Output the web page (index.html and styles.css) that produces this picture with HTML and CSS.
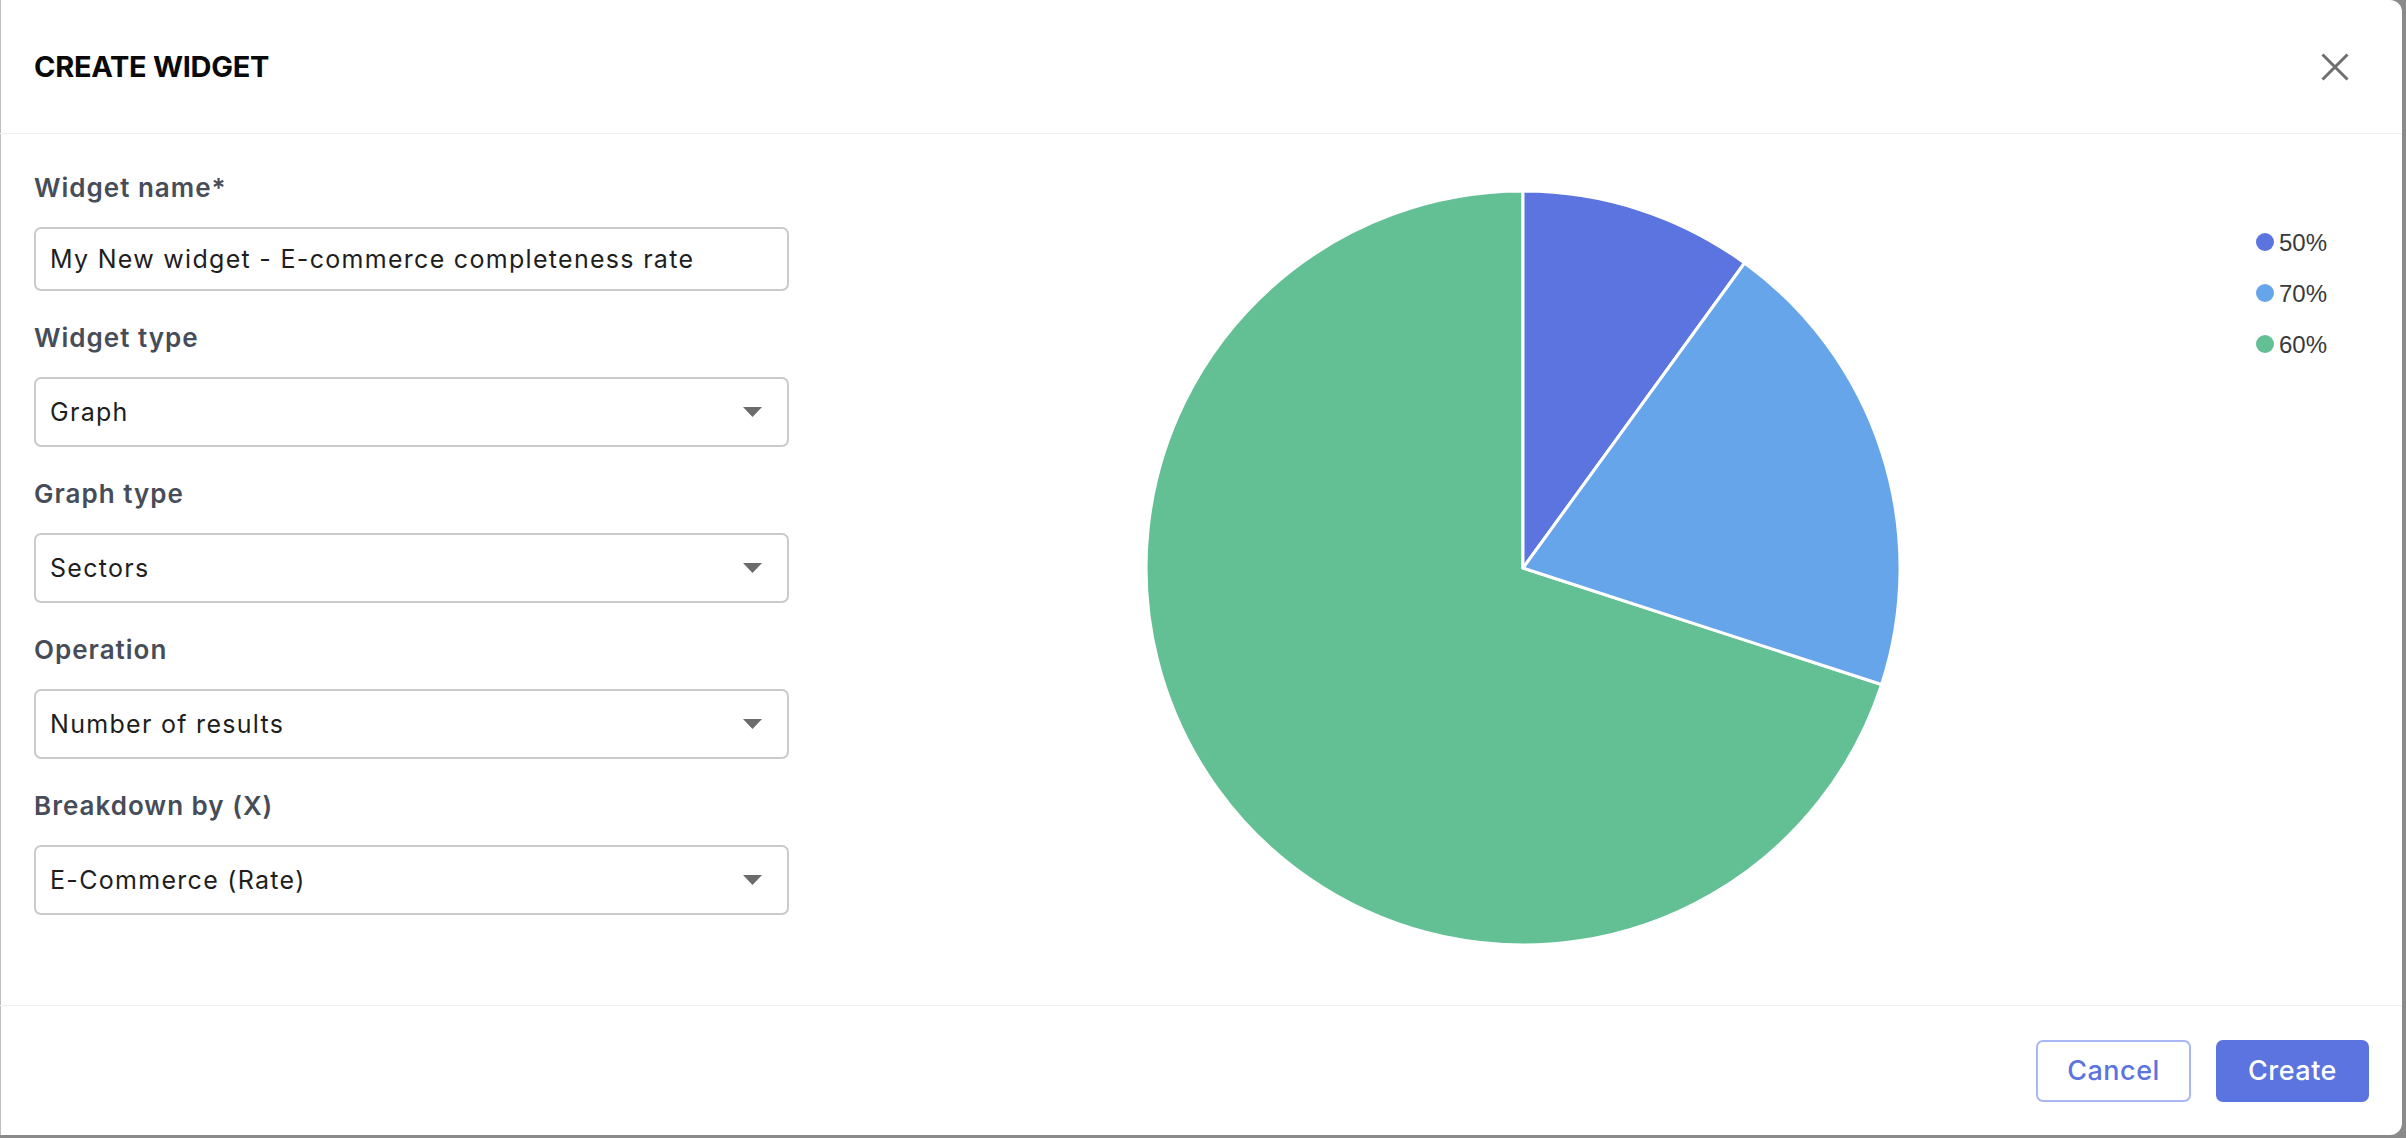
FILE: index.html
```html
<!DOCTYPE html>
<html lang="en">
<head>
<meta charset="utf-8">
<title>Create widget</title>
<link rel="stylesheet" href="styles.css">
</head>
<body>
<div class="modal">
  <header class="modal-header">
    <h1 class="title">CREATE WIDGET</h1>
    <button class="close" aria-label="Close">
      <svg width="28" height="28" viewBox="0 0 28 28"><path d="M1.5 1.5 L26.5 26.5 M26.5 1.5 L1.5 26.5" stroke="#6f6f6f" stroke-width="3" fill="none"/></svg>
    </button>
  </header>
  <main class="modal-body">
    <section class="form">
      <div class="group">
        <div class="label">Widget name*</div>
        <div class="field input"><span class="value">My New widget - E-commerce completeness rate</span></div>
      </div>
      <div class="group">
        <div class="label">Widget type</div>
        <div class="field select"><span class="value">Graph</span><svg class="caret" width="19" height="10" viewBox="0 0 19 10"><polygon points="0,0 19,0 9.5,10" fill="#6b6b6b"/></svg></div>
      </div>
      <div class="group">
        <div class="label">Graph type</div>
        <div class="field select"><span class="value">Sectors</span><svg class="caret" width="19" height="10" viewBox="0 0 19 10"><polygon points="0,0 19,0 9.5,10" fill="#6b6b6b"/></svg></div>
      </div>
      <div class="group">
        <div class="label">Operation</div>
        <div class="field select"><span class="value">Number of results</span><svg class="caret" width="19" height="10" viewBox="0 0 19 10"><polygon points="0,0 19,0 9.5,10" fill="#6b6b6b"/></svg></div>
      </div>
      <div class="group">
        <div class="label">Breakdown by (X)</div>
        <div class="field select"><span class="value">E-Commerce (Rate)</span><svg class="caret" width="19" height="10" viewBox="0 0 19 10"><polygon points="0,0 19,0 9.5,10" fill="#6b6b6b"/></svg></div>
      </div>
    </section>
    <section class="chart">
      <svg class="chart-svg" width="1613" height="872" viewBox="0 0 1613 872">
        <g stroke="#ffffff" stroke-width="3" stroke-linejoin="round">
          <path d="M734,434 L1092.6,550.5 A377,377 0 1 1 734,57 Z" fill="#63c094"/>
          <path d="M734,434 L734,57 A377,377 0 0 1 955.6,129 Z" fill="#5b74df"/>
          <path d="M734,434 L955.6,129 A377,377 0 0 1 1092.6,550.5 Z" fill="#66a5ea"/>
        </g>
        <g class="legend">
          <circle cx="1476" cy="108" r="9" fill="#5b74df"/>
          <text x="1490" y="116.5">50%</text>
          <circle cx="1476" cy="159" r="9" fill="#66a5ea"/>
          <text x="1490" y="167.5">70%</text>
          <circle cx="1476" cy="210" r="9" fill="#63c094"/>
          <text x="1490" y="218.5">60%</text>
        </g>
      </svg>
    </section>
  </main>
  <footer class="modal-footer">
    <button class="btn btn-outline">Cancel</button>
    <button class="btn btn-primary">Create</button>
  </footer>
</div>
</body>
</html>
```
FILE: styles.css
```css
* { box-sizing: border-box; }
html, body { margin: 0; padding: 0; }
body {
  background: #8a8a8a;
  width: 2406px;
  height: 1138px;
  overflow: hidden;
  font-family: "Inter", "Noto Sans", sans-serif;
}
.modal {
  width: 2402px;
  height: 1135px;
  background: #ffffff;
  border-radius: 0 12px 12px 0;
  box-shadow: inset 1px 0 0 #bdbdbd;
  display: flex;
  flex-direction: column;
}
.modal-header {
  height: 134px;
  border-bottom: 1px solid #eeeef4;
  display: flex;
  align-items: center;
  justify-content: space-between;
  padding: 0 53px 0 34px;
}
.title {
  margin: 0;
  font-size: 29px;
  font-weight: 700;
  color: #0a0a0a;
  letter-spacing: -0.3px;
}
.close {
  border: 0;
  background: none;
  padding: 0;
  width: 28px;
  height: 28px;
  display: flex;
}
.modal-body {
  height: 872px;
  display: flex;
  border-bottom: 1px solid #eeeef4;
}
.form {
  width: 789px;
  padding: 34px 0 0 34px;
  display: flex;
  flex-direction: column;
  gap: 27px;
}
.group {
  display: flex;
  flex-direction: column;
  gap: 19px;
}
.label {
  height: 40px;
  line-height: 40px;
  font-size: 26px;
  font-weight: 600;
  color: #474d58;
  letter-spacing: 1px;
}
.field {
  border: 2px solid #cbcbcb;
  border-radius: 7px;
  display: flex;
  align-items: center;
  justify-content: space-between;
  padding: 0 25px 0 14px;
  font-size: 25px;
  letter-spacing: 1.3px;
  color: #1e1e1e;
}
.input { height: 64px; }
.select { height: 70px; }
.chart { flex: 1; }
.chart-svg { display: block; }
.legend text {
  font-family: "Liberation Sans", Arial, sans-serif;
  font-size: 24px;
  fill: #3a3a3a;
}
.modal-footer {
  flex: 1;
  display: flex;
  align-items: center;
  justify-content: flex-end;
  gap: 25px;
  padding: 0 33px 0 0;
}
.btn {
  height: 62px;
  border-radius: 7px;
  font-family: "Inter", "Noto Sans", sans-serif;
  font-size: 27px;
  font-weight: 500;
  letter-spacing: 0.5px;
  cursor: pointer;
}
.btn-outline {
  width: 155px;
  background: #ffffff;
  border: 2px solid #a9b8f5;
  color: #5b74df;
}
.btn-primary {
  width: 153px;
  background: #5b74df;
  border: 2px solid #5b74df;
  color: #ffffff;
}
```
